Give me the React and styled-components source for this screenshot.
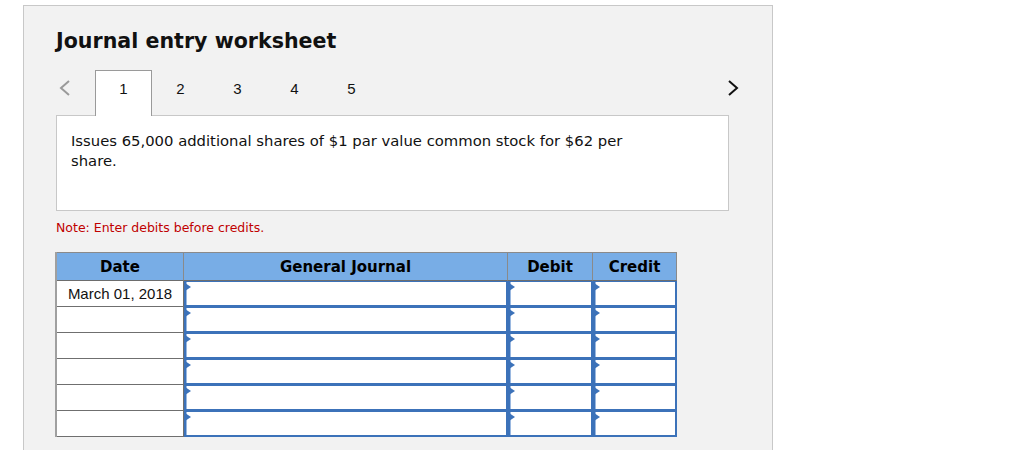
import { Fragment } from "react";
import styled, { createGlobalStyle } from "styled-components";

const GlobalStyle = createGlobalStyle`
    body {
        margin: 0;
        background: #ffffff;
        font-family: 'DejaVu Sans', Verdana, sans-serif;
    }
`;

const Panel = styled.div`
    margin: 5px 0 0 23px;
    width: 750px;
    min-height: 460px;
    box-sizing: border-box;
    background: #f2f2f2;
    border: 1px solid #c8c8c8;
    border-bottom: none;
    padding: 22px 0 0 32px;
`;

const Title = styled.h1`
    margin: 0;
    font-family: 'DejaVu Sans', Verdana, sans-serif;
    font-size: 20.6px;
    font-weight: bold;
    color: #111;
    line-height: 26px;
`;

const TabBar = styled.div`
    display: flex;
    align-items: flex-end;
    width: 683px;
    margin-top: 16px;
    height: 45px;
`;

const Arrow = styled.button`
    border: none;
    background: none;
    padding: 0 0 9px ${(p) => (p.$right ? "0" : "3px")};
    width: 39px;
    height: 45px;
    display: flex;
    align-items: center;
    justify-content: ${(p) => (p.$right ? "flex-end" : "flex-start")};
    margin-left: ${(p) => (p.$right ? "auto" : "0")};
    box-sizing: border-box;
    cursor: pointer;
`;

const Tab = styled.div`
    width: 57px;
    box-sizing: border-box;
    display: flex;
    align-items: center;
    justify-content: center;
    padding-bottom: 10px;
    font-family: 'Liberation Sans', Arial, sans-serif;
    font-size: 15px;
    color: #111;
    background: ${(p) => (p.$active ? "#ffffff" : "transparent")};
    border: 1px solid ${(p) => (p.$active ? "#9a9a9a" : "transparent")};
    border-bottom: none;
    position: relative;
    z-index: 1;
    margin-bottom: ${(p) => (p.$active ? "-1px" : "0")};
    height: ${(p) => (p.$active ? "46px" : "45px")};
`;

const Prompt = styled.div`
    width: 673px;
    height: 96px;
    box-sizing: border-box;
    background: #ffffff;
    border: 1px solid #c8c8c8;
    padding: 15px 14px;
`;

const PromptText = styled.p`
    margin: 0;
    max-width: 585px;
    font-size: 14.8px;
    line-height: 20px;
    color: #111;
`;

const Note = styled.p`
    margin: 9px 0 0;
    font-size: 12.5px;
    line-height: 15px;
    color: #c00000;
`;

const Grid = styled.div`
    display: grid;
    grid-template-columns: 127px 324px 85px 84px;
    width: 620px;
    margin-top: 17px;
    border-left: 2px solid #a0a0a0;
    margin-left: -1px;
`;

const HeadCell = styled.div`
    height: 29px;
    box-sizing: border-box;
    background: #78ade6;
    border-top: 1px solid #8a8a8a;
    border-right: 1px solid #8a8a8a;
    border-bottom: 1px solid #6d6d6d;
    display: flex;
    align-items: center;
    justify-content: center;
    font-size: 15px;
    font-weight: bold;
    color: #000;
`;

const DateCell = styled.div`
    height: 26px;
    box-sizing: border-box;
    background: #fff;
    border-right: 1px solid #6f6f6f;
    border-bottom: 1px solid #6f6f6f;
    display: flex;
    align-items: center;
    justify-content: center;
    font-family: 'Liberation Sans', Arial, sans-serif;
    font-size: 15px;
    color: #111;
`;

const InputCell = styled.div`
    height: 26px;
    box-sizing: border-box;
    background: #fff;
    border: 2px solid #3c72b9;
    border-top-width: 1px;
    position: relative;
    box-shadow: inset 1px 0 0 #9ab8e0;

    &::before {
        content: "";
        position: absolute;
        left: -1px;
        top: 1px;
        border-left: 6px solid #3c72b9;
        border-top: 4px solid transparent;
        border-bottom: 4px solid transparent;
    }
`;

const rows = ["March 01, 2018", "", "", "", "", ""];

function Chevron({ right }) {
    return (
        <svg width="12" height="18" viewBox="0 0 12 18">
            <path
                d={right ? "M2 2 L10 9 L2 16" : "M10 2 L2 9 L10 16"}
                fill="none"
                stroke={right ? "#111" : "#9a9a9a"}
                strokeWidth="2"
            />
        </svg>
    );
}

export default function App() {
    return (
        <>
            <GlobalStyle />
            <Panel>
                <Title>Journal entry worksheet</Title>
                <TabBar>
                    <Arrow><Chevron /></Arrow>
                    {[1, 2, 3, 4, 5].map((n) => (
                        <Tab key={n} $active={n === 1}>{n}</Tab>
                    ))}
                    <Arrow $right><Chevron right /></Arrow>
                </TabBar>
                <Prompt>
                    <PromptText>
                        Issues 65,000 additional shares of $1 par value common stock for $62 per share.
                    </PromptText>
                </Prompt>
                <Note>Note: Enter debits before credits.</Note>
                <Grid>
                    <HeadCell>Date</HeadCell>
                    <HeadCell>General Journal</HeadCell>
                    <HeadCell>Debit</HeadCell>
                    <HeadCell>Credit</HeadCell>
                    {rows.map((d, i) => (
                        <Fragment key={i}>
                            <DateCell>{d}</DateCell>
                            <InputCell />
                            <InputCell />
                            <InputCell />
                        </Fragment>
                    ))}
                </Grid>
            </Panel>
        </>
    );
}
